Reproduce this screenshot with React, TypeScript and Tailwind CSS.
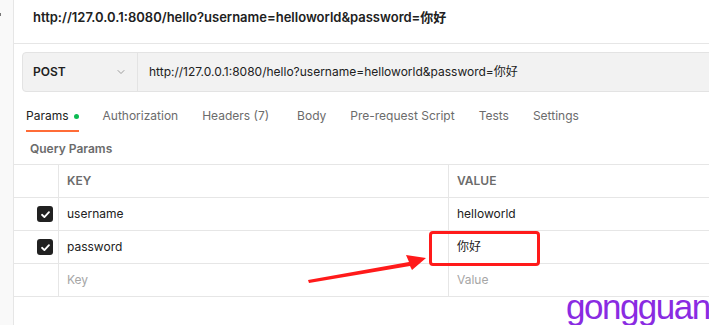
import { ChevronDown } from "lucide-react";

const tabs = [
  { label: "Authorization", extra: "" },
  { label: "Headers (7)", extra: "" },
  { label: "Body", extra: "ml-[4px]" },
  { label: "Pre-request Script", extra: "" },
  { label: "Tests", extra: "" },
  { label: "Settings", extra: "" },
];

const rows = [
  { key: "username", value: "helloworld", checked: true },
  { key: "password", value: "你好", checked: true },
];

function Checkbox() {
  return (
    <div className="flex h-[16px] w-[16px] items-center justify-center rounded-[3px] bg-[#212121]">
      <svg width="11" height="11" viewBox="0 0 12 12" fill="none">
        <path
          d="M2.2 6.3 4.8 8.8 9.8 3.4"
          stroke="white"
          strokeWidth="2"
          strokeLinecap="round"
          strokeLinejoin="round"
        />
      </svg>
    </div>
  );
}

export default function App() {
  return (
    <div className="relative flex h-[325px] w-[709px] overflow-hidden bg-white font-['Inter','Noto_Sans_CJK_SC',sans-serif] text-[12px] text-[#212121]">
      {/* left rail */}
      <div className="relative w-[14px] shrink-0 border-r border-[#e6e6e6] bg-[#f9f9f9]">
        <div className="absolute left-0 top-[13px] h-[3px] w-[1px] bg-[#777]" />
      </div>

      <div className="min-w-0 flex-1">
        {/* title */}
        <div className="flex h-[44px] items-center whitespace-nowrap border-b border-[#e6e6e6] pb-[7px] pl-[19px] text-[13px] font-semibold">
          http://127.0.0.1:8080/hello?username=helloworld&amp;password=你好
        </div>

        {/* request bar */}
        <div className="ml-[8px] mt-[8px] flex h-[40px] w-[720px] rounded-[4px] border border-[#e3e3e3] bg-[#f2f2f2]">
          <div className="flex w-[115px] items-center justify-between border-r border-[#e3e3e3] pl-[10px] pr-[10px]">
            <span className="font-semibold">POST</span>
            <ChevronDown size={12} strokeWidth={1.5} className="text-[#808080]" />
          </div>
          <div className="flex items-center whitespace-nowrap pl-[11px]">
            http://127.0.0.1:8080/hello?username=helloworld&amp;password=你好
          </div>
        </div>

        {/* tabs */}
        <div className="ml-[12px] flex h-[40px] gap-[24px] whitespace-nowrap">
          <div className="flex flex-col pt-[16px]">
            <div className="flex h-[16px] items-center leading-[16px]">
              Params
              <span className="ml-[5px] h-[5px] w-[5px] rounded-full bg-[#0cbb52]" />
            </div>
            <div className="mt-[6px] h-[2px] bg-[#ff6c37]" />
          </div>
          {tabs.map((t) => (
            <div key={t.label} className={`pt-[16px] leading-[16px] text-[#6b6b6b] ${t.extra}`}>
              {t.label}
            </div>
          ))}
        </div>

        {/* query params */}
        <div className="mb-[7px] mt-[9px] pl-[16px] font-semibold leading-[16px] text-[#6b6b6b]">
          Query Params
        </div>

        {/* table */}
        <div className="w-[720px]">
          <div className="flex h-[34px] border-y border-[#e6e6e6] font-semibold text-[#6b6b6b]">
            <div className="w-[45px] border-r border-[#e6e6e6]" />
            <div className="flex w-[390px] items-center border-r border-[#e6e6e6] pl-[8px]">KEY</div>
            <div className="flex flex-1 items-center pl-[8px]">VALUE</div>
          </div>
          {rows.map((r) => (
            <div key={r.key} className="flex h-[33px] border-b border-[#e6e6e6]">
              <div className="flex w-[45px] items-center justify-end border-r border-[#e6e6e6] pr-[5px]">
                {r.checked && <Checkbox />}
              </div>
              <div className="flex w-[390px] items-center border-r border-[#e6e6e6] pl-[8px]">{r.key}</div>
              <div className="flex flex-1 items-center pl-[8px]">{r.value}</div>
            </div>
          ))}
          <div className="flex h-[33px] border-b border-[#e6e6e6] text-[#a6a6a6]">
            <div className="w-[45px] border-r border-[#e6e6e6]" />
            <div className="flex w-[390px] items-center border-r border-[#e6e6e6] pl-[8px]">Key</div>
            <div className="flex flex-1 items-center pl-[8px]">Value</div>
          </div>
        </div>
      </div>

      {/* annotation overlay */}
      <div className="absolute left-[429px] top-[231px] h-[35px] w-[111px] rounded-[4px] border-[3px] border-[#ff1a1a]" />
      <svg className="absolute left-0 top-0" width="709" height="325" viewBox="0 0 709 325">
        <polygon
          points="308,280 409,262 406,255 426,258 412,270 410,266 309,283"
          fill="#ff1a1a"
        />
      </svg>

      <div className="absolute left-[566px] top-[287px] font-['Liberation_Sans',sans-serif] text-[35px] leading-[40px] tracking-[-1.5px] text-[#8a2be2]">
        gongguan
      </div>
    </div>
  );
}
